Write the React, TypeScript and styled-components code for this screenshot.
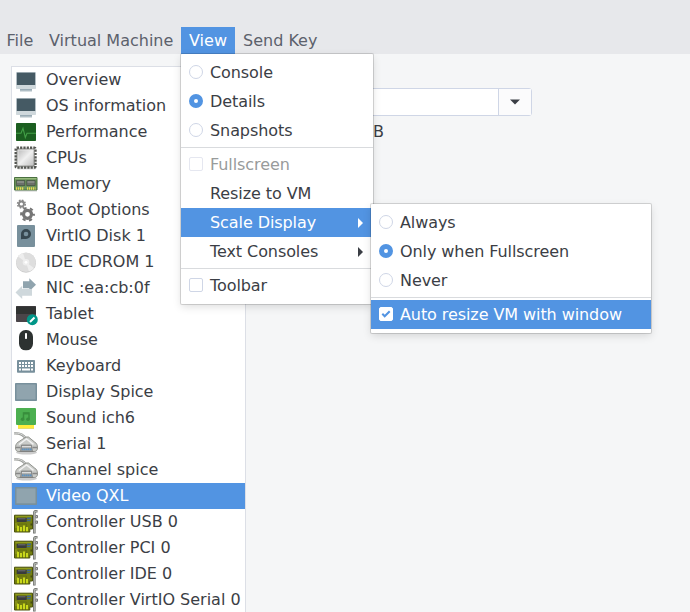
import type { ReactNode } from 'react';
import styled, { createGlobalStyle, css } from 'styled-components';

const colors = {
  header: '#e7e8eb',
  background: '#f5f6f7',
  base: '#ffffff',
  text: '#3b3e45',
  menuText: '#5c616c',
  muted: '#989b9b',
  border: '#dcdfe6',
  controlBorder: '#cfd6e6',
  selected: '#5294e2',
};

const GlobalStyle = createGlobalStyle`
  body {
    margin: 0;
    overflow: hidden;
    background: ${colors.background};
    color: ${colors.text};
    font: 16px/26px 'DejaVu Sans', sans-serif;
  }
`;

const Window = styled.div`
  display: flex;
  flex-direction: column;
  width: 690px;
  height: 612px;
  overflow: hidden;
`;

const MenuBar = styled.nav`
  display: flex;
  align-items: flex-end;
  box-sizing: border-box;
  flex: none;
  height: 54px;
  background: ${colors.header};
`;

const MenuBarItem = styled.div<{ $active?: boolean; $width: number; $inset?: number }>`
  position: relative;
  box-sizing: border-box;
  width: ${({ $width }) => $width}px;
  height: 27px;
  padding-left: ${({ $inset }) => $inset ?? 8}px;
  line-height: 27px;
  white-space: nowrap;
  color: ${({ $active }) => ($active ? '#fff' : colors.menuText)};
  background: ${({ $active }) => ($active ? colors.selected : 'transparent')};
`;

const Body = styled.main`
  display: flex;
  gap: 24px;
  padding: 12px 0 0 11px;
`;

const DeviceList = styled.ul`
  flex: none;
  box-sizing: border-box;
  width: 235px;
  height: 560px;
  margin: 0;
  padding: 0;
  list-style: none;
  overflow: hidden;
  background: ${colors.base};
  border: 1px solid ${colors.border};
`;

const DeviceRow = styled.li<{ $selected: boolean }>`
  display: flex;
  align-items: center;
  gap: 8px;
  height: 26px;
  padding-left: 2px;
  white-space: nowrap;
  color: ${({ $selected }) => ($selected ? '#fff' : colors.text)};
  background: ${({ $selected }) => ($selected ? colors.selected : 'transparent')};

  svg {
    flex: none;
  }
`;

const Details = styled.section`
  display: flex;
  flex-direction: column;
  align-items: flex-end;
  width: 262px;
  padding-top: 22px;
`;

const Combo = styled.div`
  display: flex;
  box-sizing: border-box;
  width: 262px;
  height: 28px;
  background: ${colors.base};
  border: 1px solid ${colors.controlBorder};
  border-radius: 3px;
`;

const ComboButton = styled.div`
  display: flex;
  align-items: center;
  justify-content: center;
  width: 32px;
  margin-left: auto;
  background: #fbfbfc;
  border-left: 1px solid ${colors.controlBorder};
`;

const RamUnit = styled.div`
  width: 159px;
  margin-top: 3px;
`;

const Popup = styled.div<{ $left: number; $top: number; $width: number }>`
  position: absolute;
  z-index: 1;
  left: ${({ $left }) => $left}px;
  top: ${({ $top }) => $top}px;
  box-sizing: border-box;
  width: ${({ $width }) => $width}px;
  padding: 4px 0;
  color: ${colors.text};
  letter-spacing: -0.08px;
  background: ${colors.base};
  border-radius: 1px;
  box-shadow:
    0 0 0 1px rgba(0, 0, 0, 0.14),
    0 3px 8px rgba(0, 0, 0, 0.13);
`;

const MenuItem = styled.div<{ $active?: boolean; $disabled?: boolean }>`
  position: relative;
  display: grid;
  grid-template-columns: 14px 1fr 6px;
  column-gap: 7px;
  align-items: center;
  height: 29px;
  padding: 0 9px 0 8px;
  line-height: 29px;
  white-space: nowrap;
  color: ${({ $active, $disabled }) => ($active ? '#fff' : $disabled ? colors.muted : 'inherit')};
  background: ${({ $active }) => ($active ? colors.selected : 'transparent')};
`;

const ItemLabel = styled.span`
  grid-column: 2;
`;

const Separator = styled.div`
  height: 1px;
  margin: 2px 0;
  background: #d9dbde;
`;

const indicator = css`
  display: flex;
  align-items: center;
  justify-content: center;
  box-sizing: border-box;
  width: 14px;
  height: 14px;
  margin-bottom: 1px;
  background: #fff;
  border: 1px solid ${colors.controlBorder};
`;

const Radio = styled.span<{ $checked?: boolean }>`
  ${indicator}
  border-radius: 50%;
  ${({ $checked }) =>
    $checked &&
    css`
      border: 5px solid ${colors.selected};
    `}
`;

const Check = styled.span<{ $checked?: boolean; $faded?: boolean }>`
  ${indicator}
  border-radius: 2px;
  border-color: ${({ $checked, $faded }) =>
    $checked ? '#fff' : $faded ? '#e5e7f0' : colors.controlBorder};
`;

const Icon = ({ children }: { children: ReactNode }) => (
  <svg width="24" height="24" viewBox="0 0 24 24">
    {children}
  </svg>
);

const MonitorIcon = () => (
  <Icon>
    <path d="M6 20h12v3.5H6z" fill="#b0bec5" />
    <path d="M6 20.5h12v1.2H6z" fill="#90a4ae" />
    <rect x="2" y="4" width="20" height="17" rx=".7" fill="#cfd8dc" />
    <path d="M2.8 4.6h18.4V17H2.8z" fill="#455a64" />
  </Icon>
);

const PerformanceIcon = () => (
  <Icon>
    <rect x="2" y="3" width="20" height="18" rx=".8" fill="#1b5e20" />
    <path d="M2 13.2h5l2-5 2.3 9.3 1.7-4.3h9" fill="none" stroke="#43a047" strokeWidth="1.1" />
  </Icon>
);

const CpuIcon = () => (
  <Icon>
    <defs>
      <linearGradient id="chip" x2="1" y2="1">
        <stop offset="0" stopColor="#b5b5b5" />
        <stop offset=".5" stopColor="#f0f0f0" />
        <stop offset="1" stopColor="#bcbcbc" />
      </linearGradient>
    </defs>
    <rect x="3" y="20" width="19" height="3.5" rx="1.5" fill="#ddd" />
    <rect
      x="1.8"
      y="1.8"
      width="19.6"
      height="19.6"
      rx="1"
      fill="none"
      stroke="#555753"
      strokeWidth="2.6"
      strokeDasharray="2.2 1.1"
    />
    <rect x="3" y="3" width="17.2" height="17.2" rx="1" fill="url(#chip)" stroke="#6b6d69" strokeWidth=".9" />
    <path d="M4 19.5V4h15.5" fill="none" stroke="#eee" strokeWidth=".7" />
  </Icon>
);

const MemoryIcon = () => (
  <Icon>
    <path d="M1 18.5h22v1H1z" fill="#ccc" />
    <path d="M.5 5.5h22.5V18H.5z" fill="#6c955c" stroke="#4a7040" />
    <path d="M1 6.7h21.5" stroke="#a3c486" />
    <path d="M2.3 8.5h8.5v5H2.3zM12.7 8.5h8.5v5h-8.5z" fill="#6b706b" stroke="#3a4a3a" strokeWidth=".6" />
    <path d="M3 10h7M13.5 10h7" stroke="#a0a59d" />
    <path d="M2 16.5h8M13 16.5h8.5" stroke="#e8db54" strokeWidth="2.7" strokeDasharray="1.3 .7" />
  </Icon>
);

const BootIcon = () => (
  <Icon>
    <circle cx="7.4" cy="6" r="2.5" fill="none" stroke="#888" strokeWidth="1.8" />
    <circle cx="7.4" cy="6" r="3.8" fill="none" stroke="#888" strokeWidth="1.6" strokeDasharray="1.7 1.28" />
    <circle cx="13.5" cy="16.3" r="4" fill="none" stroke="#757575" strokeWidth="3.2" />
    <circle cx="13.5" cy="16.3" r="6.4" fill="none" stroke="#757575" strokeWidth="2" strokeDasharray="3.2 3.5" strokeDashoffset="1.6" />
  </Icon>
);

const DiskIcon = () => (
  <Icon>
    <rect x="3" y="1" width="18" height="22" rx="1" fill="#78909c" />
    <path d="M7 15.3V10a5 5 0 1 1 5 5H8.8z" fill="#37474f" />
    <circle cx="12" cy="10" r="2.3" fill="#78909c" />
  </Icon>
);

const CdIcon = () => (
  <Icon>
    <circle cx="12" cy="12.8" r="10" fill="#c9c9c9" />
    <circle cx="12" cy="12.3" r="9.8" fill="#dedede" />
    <path d="M12 12.3 4 6.5A9.8 9.8 0 0 1 9 3zM12 12.3l8 5.8a9.8 9.8 0 0 1-5 3.5z" fill="#eee" />
    <circle cx="12" cy="12.3" r="3.3" fill="#eee" />
    <circle cx="12" cy="12.3" r="1.4" fill="#fff" />
  </Icon>
);

const NetworkIcon = () => (
  <Icon>
    <path d="M9 5.3h6.3v-3L22 8.8l-6.7 6.5v-3H9z" fill="#90a4ae" />
    <path d="M18 13H8.2V9.8L1.5 16.5l6.7 6.6v-3.3H18z" fill="#cfd8dc" />
  </Icon>
);

const TabletIcon = () => (
  <Icon>
    <rect x="2" y="4" width="20" height="16" rx=".8" fill="#4a4549" />
    <path d="M2 4.5h20V12H2z" fill="#303332" />
    <circle cx="18.3" cy="17.7" r="5.5" fill="#009688" />
    <path d="m16 20 4.5-4.5" stroke="#fff" strokeWidth="2" />
  </Icon>
);

const MouseIcon = () => (
  <Icon>
    <rect x="5" y="2" width="14" height="20.3" rx="6.5" fill="#2d3231" />
    <rect x="11" y="5" width="2" height="6" rx=".7" fill="#fff" />
  </Icon>
);

const KeyboardIcon = () => (
  <Icon>
    <rect x="3" y="6" width="18" height="12.7" rx=".8" fill="#78909c" />
    <path d="M5 9h14M5 12h14" stroke="#fff" strokeWidth="2" strokeDasharray="2 1" />
    <path d="M5 15.5h2M8 15.5h8M17 15.5h2" stroke="#fff" strokeWidth="2" />
  </Icon>
);

const DisplayIcon = () => (
  <Icon>
    <rect x="1" y="3" width="22" height="18" rx=".8" fill="#78909c" />
    <path d="M2.5 4.5h19v14.8h-19z" fill="#90a4ae" />
  </Icon>
);

const SoundIcon = () => (
  <Icon>
    <path d="M4 19h16v3.7H4z" fill="#e0ce32" />
    <path d="M4 18h16v4H4z" fill="#ffeb3b" />
    <rect x="2" y="2" width="20" height="17" rx="1" fill="#4caf50" />
    <path d="M9.5 13V7H15v6" fill="none" stroke="#388e3c" strokeWidth="1.5" />
    <path d="M9.5 7.5H15" stroke="#388e3c" strokeWidth="2" />
    <circle cx="8.6" cy="13.3" r="1.8" fill="#388e3c" />
    <circle cx="14" cy="13.3" r="1.8" fill="#388e3c" />
  </Icon>
);

const SerialIcon = () => (
  <Icon>
    <ellipse cx="12.5" cy="20.5" rx="10.5" ry="2" fill="#ccc" />
    <path d="M0 1.3c5-.4 9 .7 12.2 5.7" fill="none" stroke="#999c98" strokeWidth="2.3" />
    <path d="M0 1.2c5-.4 9 .7 12.2 5.7" fill="none" stroke="#ddd" strokeWidth="1" />
    <path
      d="M12 5 4 10.2c-2 1.4-2.5 3.3-2.5 5.8 0 2 1 3.5 3 3.5h15.8c2 0 3.2-1.5 3.2-3.5 0-3-.8-4.8-2.8-5.9L14.5 5z"
      fill="#c9cbc8"
      stroke="#888a85"
      strokeWidth=".9"
    />
    <path d="M5 12.5 12.5 7l7 5.3" fill="none" stroke="#f2f2f2" strokeWidth="1.5" />
    <path d="M2 15.5h4.5M18.5 15.5H23" stroke="#888" strokeWidth="1.4" />
    <path d="m7.5 13-1 6.5h12l-1.2-6.5z" fill="#9a9d9c" stroke="#777" strokeWidth=".7" />
    <path d="M8 14.7h9" stroke="#e4e4e4" strokeWidth="1.2" />
    <path d="M8 17.4h9.5" stroke="#5b92c4" strokeWidth="1.8" strokeDasharray="1.5 .5" />
  </Icon>
);

const ControllerIcon = () => (
  <Icon>
    <path d="M.5 5.2h18V19h-2.7v3H.5z" fill="#747f10" stroke="#4b520b" />
    <path d="M1.5 6.7h16M2 13v5" stroke="#97a31f" />
    <path d="M3 15.5h2v5.8H3zM6 17h2v4.3H6zM9 15.5h2v5.8H9zM12 17h2v4.3h-2z" fill="#c9d81b" />
    <path d="M4.5 16v-2h8v3" fill="none" stroke="#626d12" strokeWidth=".8" />
    <rect x="2.7" y="7.8" width="10" height="4.3" rx=".7" fill="#393b3d" />
    <path d="M4 8.8h7.5" stroke="#6d7073" />
    <path d="M13 8.2h4M13 10.5h3.5" stroke="#3f6590" strokeWidth="1.4" />
    <path d="M16.5 14.5h2" stroke="#454b12" strokeWidth="2" />
    <path d="M23.5 1.2H22c-1.2 0-1.7.5-1.7 1.5V23.5" fill="none" stroke="#6f716e" strokeWidth="2.6" />
    <path d="M23.3 1.2H22c-1.2 0-1.7.5-1.7 1.5v20" fill="none" stroke="#babdb6" strokeWidth="1.1" />
    <path d="M21.8 5.5h1.7v2.3h-1.7zm0 5.5h1.7v2.3h-1.7z" fill="#ddd" stroke="#777" />
  </Icon>
);

const DropArrow = () => (
  <svg width="10" height="6" viewBox="0 0 10 6">
    <path d="M0 .5h10L5 5.5z" fill={colors.text} />
  </svg>
);

const SubmenuArrow = () => (
  <svg width="6" height="10" viewBox="0 0 6 10">
    <path d="M0 0v10l5-5z" fill="currentColor" />
  </svg>
);

const Tick = () => (
  <svg width="10" height="10" viewBox="0 0 10 10">
    <path d="m1.3 4.7 2.4 2.5 5-5" fill="none" stroke={colors.selected} strokeWidth="2" />
  </svg>
);

const devices = [
  { label: 'Overview', icon: MonitorIcon },
  { label: 'OS information', icon: MonitorIcon },
  { label: 'Performance', icon: PerformanceIcon },
  { label: 'CPUs', icon: CpuIcon },
  { label: 'Memory', icon: MemoryIcon },
  { label: 'Boot Options', icon: BootIcon },
  { label: 'VirtIO Disk 1', icon: DiskIcon },
  { label: 'IDE CDROM 1', icon: CdIcon },
  { label: 'NIC :ea:cb:0f', icon: NetworkIcon },
  { label: 'Tablet', icon: TabletIcon },
  { label: 'Mouse', icon: MouseIcon },
  { label: 'Keyboard', icon: KeyboardIcon },
  { label: 'Display Spice', icon: DisplayIcon },
  { label: 'Sound ich6', icon: SoundIcon },
  { label: 'Serial 1', icon: SerialIcon },
  { label: 'Channel spice', icon: SerialIcon },
  { label: 'Video QXL', icon: DisplayIcon },
  { label: 'Controller USB 0', icon: ControllerIcon },
  { label: 'Controller PCI 0', icon: ControllerIcon },
  { label: 'Controller IDE 0', icon: ControllerIcon },
  { label: 'Controller VirtIO Serial 0', icon: ControllerIcon },
];

const ScaleMenu = () => (
  <Popup $left={190} $top={-4} $width={280}>
    <MenuItem>
      <Radio />
      <ItemLabel>Always</ItemLabel>
    </MenuItem>
    <MenuItem>
      <Radio $checked />
      <ItemLabel>Only when Fullscreen</ItemLabel>
    </MenuItem>
    <MenuItem>
      <Radio />
      <ItemLabel>Never</ItemLabel>
    </MenuItem>
    <Separator />
    <MenuItem $active>
      <Check $checked>
        <Tick />
      </Check>
      <ItemLabel>Auto resize VM with window</ItemLabel>
    </MenuItem>
  </Popup>
);

const ViewMenu = () => (
  <Popup $left={0} $top={27} $width={192}>
    <MenuItem>
      <Radio />
      <ItemLabel>Console</ItemLabel>
    </MenuItem>
    <MenuItem>
      <Radio $checked />
      <ItemLabel>Details</ItemLabel>
    </MenuItem>
    <MenuItem>
      <Radio />
      <ItemLabel>Snapshots</ItemLabel>
    </MenuItem>
    <Separator />
    <MenuItem $disabled>
      <Check $faded />
      <ItemLabel>Fullscreen</ItemLabel>
    </MenuItem>
    <MenuItem>
      <ItemLabel>Resize to VM</ItemLabel>
    </MenuItem>
    <MenuItem $active>
      <ItemLabel>Scale Display</ItemLabel>
      <SubmenuArrow />
      <ScaleMenu />
    </MenuItem>
    <MenuItem>
      <ItemLabel>Text Consoles</ItemLabel>
      <SubmenuArrow />
    </MenuItem>
    <Separator />
    <MenuItem>
      <Check />
      <ItemLabel>Toolbar</ItemLabel>
    </MenuItem>
  </Popup>
);

export default function App() {
  return (
    <>
      <GlobalStyle />
      <Window>
        <MenuBar>
          <MenuBarItem $width={41} $inset={6.5}>File</MenuBarItem>
          <MenuBarItem $width={140}>Virtual Machine</MenuBarItem>
          <MenuBarItem $width={54} $active>
            View
            <ViewMenu />
          </MenuBarItem>
          <MenuBarItem $width={90}>Send Key</MenuBarItem>
        </MenuBar>
        <Body>
          <DeviceList>
            {devices.map(({ label, icon: DeviceIcon }) => (
              <DeviceRow key={label} $selected={label === 'Video QXL'}>
                <DeviceIcon />
                {label}
              </DeviceRow>
            ))}
          </DeviceList>
          <Details>
            <Combo>
              <ComboButton>
                <DropArrow />
              </ComboButton>
            </Combo>
            <RamUnit>B</RamUnit>
          </Details>
        </Body>
      </Window>
    </>
  );
}
